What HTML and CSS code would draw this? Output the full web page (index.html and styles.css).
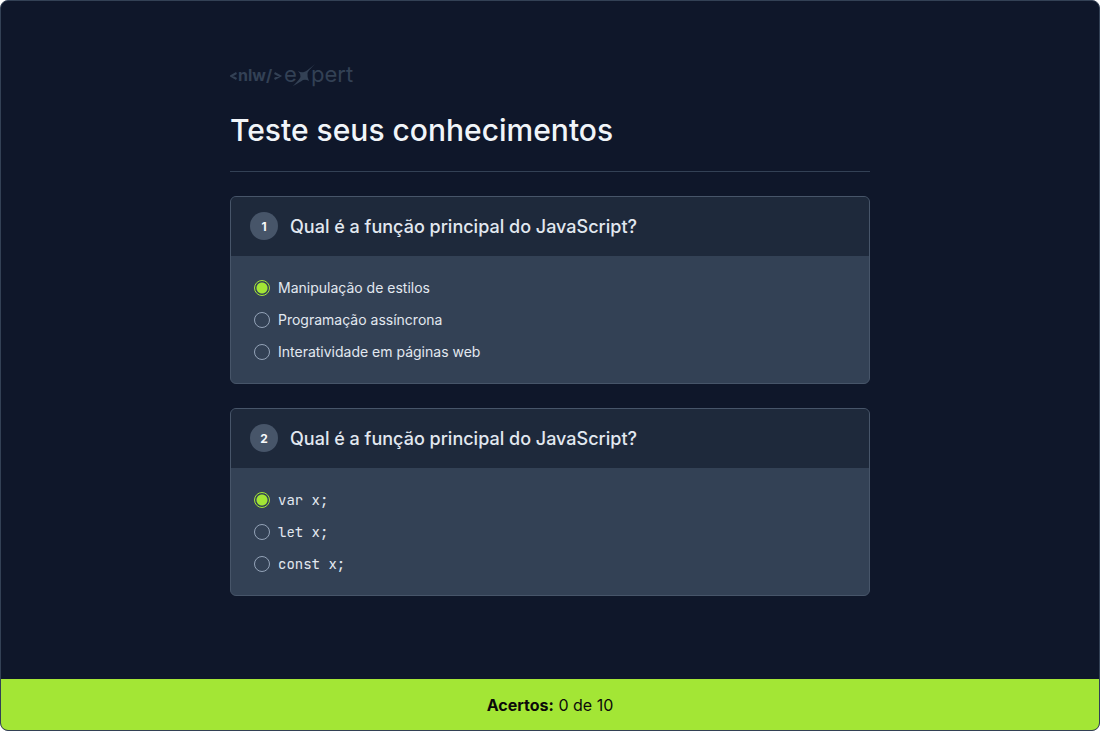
FILE: index.html
```html
<!DOCTYPE html>
<html lang="pt-BR">
<head>
<meta charset="utf-8">
<meta name="viewport" content="width=device-width, initial-scale=1">
<title>Teste seus conhecimentos</title>
<link rel="stylesheet" href="styles.css">
</head>
<body>
<div class="app">
  <main class="content">
    <header class="page-header">
      <svg class="logo" width="136" height="32" viewBox="0 -4 136 32" role="img" aria-label="nlw expert">
        <text class="logo-tag" x="8" y="17">nlw/</text>
        <path class="logo-stroke" d="M6.500 9L1 12L6.500 15M44.500 9L50 12L44.500 15"/>
        <text class="logo-word" x="54" y="18">e</text>
        <path class="logo-star" d="M85 0Q78 7 77.500 9Q77 12 79 17Q76 15 73 16Q70 18 63 22Q70 15 70.500 13Q71 10 68 7Q71 9 74 8Q77 7 85 0Z"/>
        <text class="logo-word" x="81" y="18">pert</text>
      </svg>
      <h1 class="title">Teste seus conhecimentos</h1>
    </header>

    <form class="quiz">
      <section class="card" aria-labelledby="q1">
        <header class="card-header">
          <span class="number">1</span>
          <h2 class="question" id="q1">Qual é a função principal do JavaScript?</h2>
        </header>
        <div class="options">
          <label class="option"><input class="radio" type="radio" name="q1" checked><span>Manipulação de estilos</span></label>
          <label class="option"><input class="radio" type="radio" name="q1"><span>Programação assíncrona</span></label>
          <label class="option"><input class="radio" type="radio" name="q1"><span>Interatividade em páginas web</span></label>
        </div>
      </section>

      <section class="card" aria-labelledby="q2">
        <header class="card-header">
          <span class="number">2</span>
          <h2 class="question" id="q2">Qual é a função principal do JavaScript?</h2>
        </header>
        <div class="options">
          <label class="option"><input class="radio" type="radio" name="q2" checked><code class="code">var x;</code></label>
          <label class="option"><input class="radio" type="radio" name="q2"><code class="code">let x;</code></label>
          <label class="option"><input class="radio" type="radio" name="q2"><code class="code">const x;</code></label>
        </div>
      </section>
    </form>
  </main>
  <footer class="score"><p class="score-text"><strong>Acertos:</strong> 0 de 10</p></footer>
</div>
</body>
</html>
```

FILE: styles.css
```css
* {
  box-sizing: border-box;
  margin: 0;
}

html {
  background: #ffffff;
}

body {
  font-family: Inter, "Liberation Sans", sans-serif;
  color: #e2e8f0;
}

.app {
  display: flex;
  flex-direction: column;
  min-height: 100vh;
  overflow: hidden;
  background: #0f172a;
  border: 1px solid #334155;
  border-radius: 8px;
}

.content {
  flex: 1;
  width: 100%;
  max-width: 688px;
  margin: 0 auto;
  padding: 59px 24px;
}

.page-header {
  padding-bottom: 23px;
  border-bottom: 1px solid #334155;
}

.logo {
  display: block;
  max-width: 100%;
  margin-bottom: 20px;
  fill: #334155;
}

.logo-tag {
  font-size: 16px;
  font-weight: 700;
}

.logo-word {
  font-size: 22px;
  font-weight: 400;
}

.logo-stroke {
  fill: none;
  stroke: #334155;
  stroke-width: 2;
}

.title {
  font-size: 30px;
  line-height: 36px;
  font-weight: 550;
  color: #f1f5f9;
}

.quiz {
  display: grid;
  gap: 24px;
  padding-top: 24px;
}

.card {
  overflow: hidden;
  background: #334155;
  border: 1px solid #475569;
  border-radius: 6px;
}

.card-header {
  display: flex;
  align-items: center;
  gap: 12px;
  padding: 14px 19px 15px;
  background: #1e293b;
}

.number {
  display: grid;
  flex: none;
  place-items: center;
  width: 28px;
  height: 28px;
  border-radius: 50%;
  background: #475569;
  color: #f8fafc;
  font-size: 12px;
  font-weight: 700;
}

.question {
  padding-top: 2px;
  font-size: 18px;
  line-height: 28px;
  font-weight: 550;
}

.options {
  display: grid;
  gap: 16px;
  padding: 24px 23px 23px;
}

.option {
  display: flex;
  align-items: center;
  gap: 8px;
  font-size: 14px;
  line-height: 16px;
}

.radio {
  appearance: none;
  flex: none;
  width: 16px;
  height: 16px;
  border: 1px solid #94a3b8;
  border-radius: 50%;
}

.radio:checked {
  border-color: #a3e635;
  background: radial-gradient(circle, #a3e635 5px, transparent 6px);
}

.code {
  font-family: "JetBrains Mono", "DejaVu Sans Mono", monospace;
  font-size: 14px;
}

.score {
  padding: 14px 16px 13px;
  background: #a3e635;
  color: #0c0a09;
  text-align: center;
}

.score-text {
  font-size: 16px;
  line-height: 24px;
}
```
